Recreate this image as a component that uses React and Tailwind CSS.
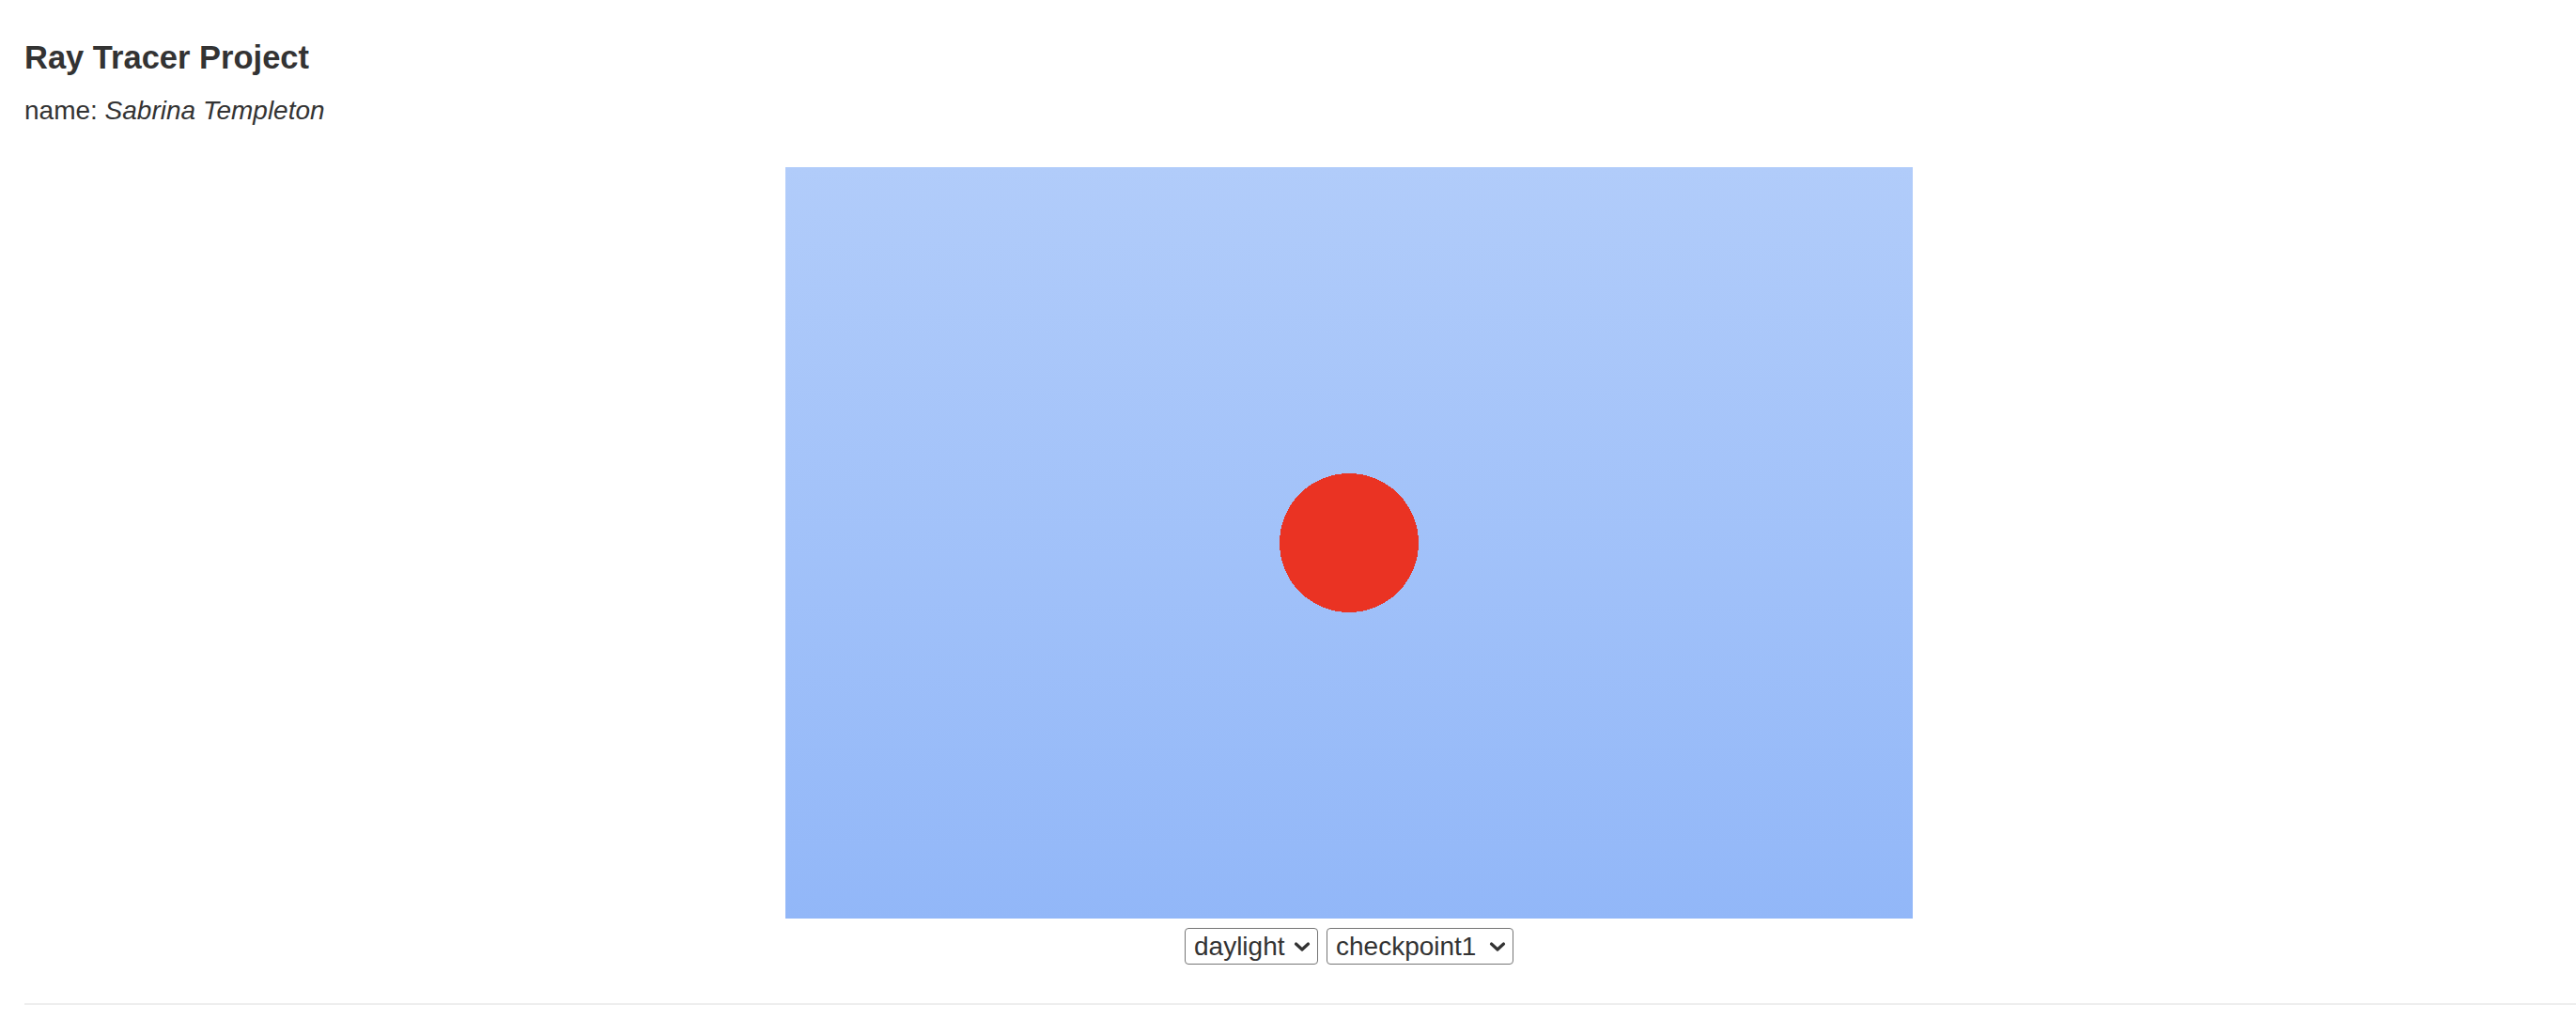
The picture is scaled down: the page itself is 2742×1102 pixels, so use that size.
import React from 'react';

function Chevron() {
  return (
    <svg width="18" height="12" viewBox="0 0 18 12" className="pointer-events-none absolute right-[8px] top-1/2 -translate-y-1/2">
      <path d="M2.5 3 L9 9 L15.5 3" fill="none" stroke="#333" strokeWidth="3.2" strokeLinecap="round" strokeLinejoin="round" />
    </svg>
  );
}

function Picker({ value, options, width }) {
  return (
    <div className="relative" style={{ width }}>
      <select
        defaultValue={value}
        className="w-full h-[39px] appearance-none rounded-[4px] border border-[#767676] bg-white pl-[9px] pr-[30px] text-[28px] leading-[37px] text-[#333]"
        style={{ fontFamily: '"Liberation Sans", Arial, sans-serif' }}
      >
        {options.map((o) => (
          <option key={o}>{o}</option>
        ))}
      </select>
      <Chevron />
    </div>
  );
}

export default function App() {
  return (
    <div className="overflow-hidden bg-white min-h-[1102px]" style={{ fontFamily: '"Liberation Sans", Arial, Helvetica, sans-serif' }}>
      <div className="w-[2846px] pl-[26px] pt-[41px] text-[#333]">
        <h2 className="text-[34.5px] leading-[40px] font-bold">Ray Tracer Project</h2>
        <p className="mt-[21px] text-[28px] leading-[32px]">
          name: <em>Sabrina Templeton</em>
        </p>

        {/* rendu */}
        <div className="mt-[44px] flex flex-col items-center">
          <div className="w-[1200px] h-[800px] flex items-center justify-center bg-gradient-to-b from-[#b1ccfa] to-[#92b7f8]">
            <svg width="150" height="150" viewBox="0 0 150 150" shapeRendering="crispEdges">
              <circle cx="75" cy="75" r="74" fill="#ea3323" />
            </svg>
          </div>
          <div className="mt-[10px] flex gap-[9px]">
            <Picker value="daylight" options={['daylight', 'night']} width={142} />
            <Picker value="checkpoint1" options={['checkpoint1', 'checkpoint2']} width={199} />
          </div>
        </div>

        <hr className="mt-[41px] border-0 border-t-2 border-[#eeeeee]" />
      </div>
    </div>
  );
}
